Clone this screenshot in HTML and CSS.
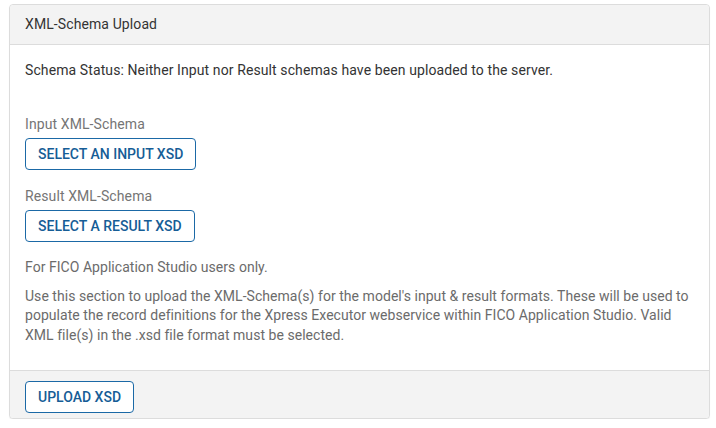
FILE: index.html
```html
<!DOCTYPE html>
<html lang="en">

<head>
    <meta charset="UTF-8">
    <meta name="viewport" content="width=device-width, initial-scale=1.0">
    <title>XML-Schema Upload</title>
    <link rel="stylesheet" href="styles.css">
</head>

<body>
    <div class="panel">
        <div class="panel-heading">XML-Schema Upload</div>
        <div class="panel-body">
            <p class="status">Schema Status: Neither Input nor Result schemas have been uploaded to the server.</p>

            <div class="field">
                <label>Input XML-Schema</label>
                <button class="btn">Select an input XSD</button>
            </div>
            <div class="field">
                <label>Result XML-Schema</label>
                <button class="btn">Select a result XSD</button>
            </div>

            <p class="help">For FICO Application Studio users only.</p>
            <p class="help">Use this section to upload the XML-Schema(s) for the model's input &amp; result formats. These will be used to populate the record definitions for the Xpress Executor webservice within FICO Application Studio. Valid XML file(s) in the .xsd file format must be selected.</p>
        </div>
        <div class="panel-footer">
            <button class="btn">Upload XSD</button>
        </div>
    </div>
</body>

</html>
```

FILE: styles.css
```css
body {
    margin: 0;
    padding: 4px 6px 0 9px;
    background-color: #fff;
    font-family: Roboto, "Liberation Sans", sans-serif;
    font-size: 14px;
    letter-spacing: 0.1px;
    color: #333;
}

.panel {
    border: 1px solid #dcdcdc;
    border-radius: 4px;
    background-color: #fff;
    box-shadow: 0 1px 1px rgba(0, 0, 0, 0.05);
}

.panel-heading {
    background-color: #f3f3f3;
    border-bottom: 1px solid #dcdcdc;
    border-radius: 4px 4px 0 0;
    padding: 10px 15px;
    line-height: 19px;
    color: #333;
}

.panel-body {
    padding: 15px 15px 16px;
}

.status {
    margin: 0 0 34px;
    line-height: 20px;
}

.field {
    margin-bottom: 16px;
}

.field label {
    display: block;
    color: #757575;
    line-height: 20px;
    margin-bottom: 4px;
}

.btn {
    font-family: inherit;
    font-size: 14px;
    font-weight: 500;
    text-transform: uppercase;
    color: #165d96;
    background-color: #fff;
    border: 1px solid #1b69a6;
    border-radius: 4px;
    height: 32px;
    padding: 0 12px;
    letter-spacing: 0;
}

.help {
    margin: 0 0 9px;
    color: #6b6b6b;
    line-height: 19.5px;
    letter-spacing: 0.04px;
}

.panel-footer {
    background-color: #f3f3f3;
    border-top: 1px solid #dcdcdc;
    border-radius: 0 0 4px 4px;
    padding: 10px 15px 5px;
}
```
